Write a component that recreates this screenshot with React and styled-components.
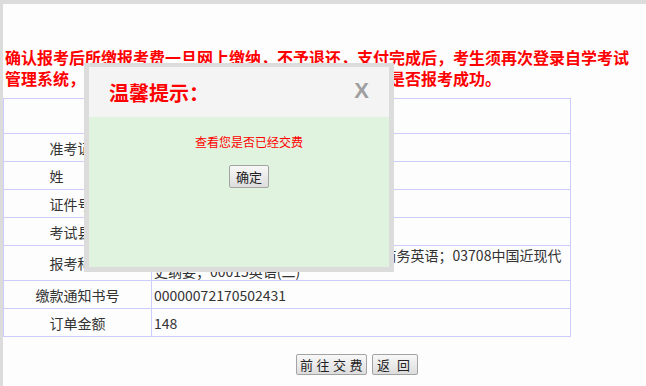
import React from 'react'
import styled, { createGlobalStyle } from 'styled-components'

const Global = createGlobalStyle`
  html, body {
    margin: 0;
    padding: 0;
    background: #dcdcdc;
  }
  body {
    font-family: "Noto Sans CJK SC", "Liberation Sans", sans-serif;
  }
`

const Frame = styled.div`
  position: relative;
  margin: 4px 0 0 3px;
  min-height: 382px;
  background: #fdfdfd;
  padding-top: 43px;
  box-sizing: border-box;
`

const Notice = styled.p`
  margin: 0 6px 9px 2px;
  color: #ff0000;
  font-size: 16px;
  font-weight: bold;
  line-height: 21px;
`

const InfoTable = styled.table`
  width: 568px;
  border-collapse: collapse;
  font-size: 14px;
  color: #333;
`

const Cell = styled.td`
  border: 1px solid #ccccff;
  height: ${p => (p.$tall ? 32 : 25)}px;
  padding: 1px 2px;
  line-height: 16px;
  text-align: ${p => (p.$label ? 'center' : 'left')};
  width: ${p => (p.$label ? '143px' : 'auto')};
  vertical-align: middle;
`

const Actions = styled.div`
  display: flex;
  gap: 5px;
  padding: 17px 0 0 293px;
`

const Button = styled.button`
  font-family: "Noto Sans CJK SC", sans-serif;
  font-size: 13px;
  color: #222;
  height: ${p => p.$h || 21}px;
  padding: 0 ${p => p.$pr || 0}px 0 ${p => p.$pl || 3}px;
  border: 1px solid #a3a3a3;
  border-radius: 2px;
  background: linear-gradient(#f8f8f8, #dddddd);
  line-height: 1;
  letter-spacing: ${p => p.$ls || 0}px;
`

const Dialog = styled.div`
  position: absolute;
  left: 81px;
  top: 59px;
  width: 300px;
  border: 5px solid #dcdcdc;
  border-top-width: 4px;
`

const DialogHead = styled.div`
  height: 50px;
  background: #f4f4f4;
  display: flex;
  align-items: center;
  justify-content: space-between;
  padding: 0 20px;
`

const DialogTitle = styled.span`
  color: #ff0000;
  font-size: 20px;
  font-weight: bold;
`

const Close = styled.span`
  color: #a0a0a0;
  font-family: "Liberation Sans", sans-serif;
  font-size: 22px;
  font-weight: bold;
  margin-top: -2px;
`

const DialogBody = styled.div`
  height: 150px;
  box-sizing: border-box;
  background: #dff3df;
  padding: 16px 0 0 20px;
  display: flex;
  flex-direction: column;
  align-items: center;
  gap: 14px;
`

const Message = styled.div`
  color: #ff0000;
  font-size: 12px;
  line-height: 18px;
`

const rows = [
  ['准考证号', '011718200123'],
  ['姓　　名', '张某某'],
  ['证件号码', '110105199001011234'],
  ['考试县区', '朝阳区'],
]

export default function App() {
  return (
    <>
      <Global />
      <Frame>
        <Notice>
          确认报考后所缴报考费一旦网上缴纳，不予退还，支付完成后，考生须再次登录自学考试管理系统，查看个人报考信息中的缴费状态，以便确认是否报考成功。
        </Notice>
        <InfoTable>
          <tbody>
            <tr>
              <Cell colSpan={2} style={{ height: 32 }} />
            </tr>
            {rows.map(([k, v]) => (
              <tr key={k}>
                <Cell $label>{k}</Cell>
                <Cell>{v}</Cell>
              </tr>
            ))}
            <tr>
              <Cell $label $tall>报考科目</Cell>
              <Cell $tall>00054管理学；00184市场学；00795商务英语；03708中国近现代史纲要；00015英语(二)</Cell>
            </tr>
            <tr>
              <Cell $label>缴款通知书号</Cell>
              <Cell>00000072170502431</Cell>
            </tr>
            <tr>
              <Cell $label>订单金额</Cell>
              <Cell>148</Cell>
            </tr>
          </tbody>
        </InfoTable>
        <Actions>
          <Button $pl={3} $ls={3.5}>前往交费</Button>
          <Button $pl={4} $ls={7}>返回</Button>
        </Actions>
        <Dialog>
          <DialogHead>
            <DialogTitle>温馨提示：</DialogTitle>
            <Close>X</Close>
          </DialogHead>
          <DialogBody>
            <Message>查看您是否已经交费</Message>
            <Button $h={23} $pl={6} $pr={6}>确定</Button>
          </DialogBody>
        </Dialog>
      </Frame>
    </>
  )
}
